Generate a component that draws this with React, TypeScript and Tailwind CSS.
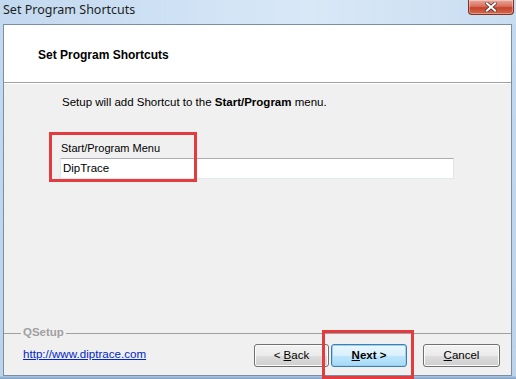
import React from "react";

const ui = { fontFamily: '"Liberation Sans", Arial, sans-serif' };

function Btn({
  children,
  primary = false,
  className = "",
}: {
  children: React.ReactNode;
  primary?: boolean;
  className?: string;
}) {
  return (
    <div
      className={`flex h-[23px] items-center justify-center rounded-[3px] border text-[11.5px] text-black ${
        primary
          ? "border-[#3c7fb1] bg-[linear-gradient(#eaf6fd,#d9f0fc_50%,#bee6fd_51%,#a7d9f5)] shadow-[inset_0_0_0_1px_#9bd1f0]"
          : "border-[#707070] bg-[linear-gradient(#f2f2f2,#ebebeb_50%,#dddddd_51%,#cfcfcf)] shadow-[inset_0_0_0_1px_#fcfcfc]"
      } ${className}`}
    >
      {children}
    </div>
  );
}

export default function App() {
  return (
    <div
      className="relative flex h-[379px] w-[516px] flex-col overflow-hidden bg-[#bcd4ec]"
      style={ui}
    >
      {/* Title bar */}
      <div className="flex h-[24px] shrink-0 items-start justify-between bg-[linear-gradient(90deg,#c3d9ef,#cfe2f5_35%,#d9e8f7_60%,#c9ddf1)]">
        <div
          className="pl-[3px] pt-[1px] text-[12.5px] leading-[17px] text-[#1e1e1e]"
          style={{ fontFamily: '"Noto Sans", "Open Sans", sans-serif' }}
        >
          Set Program Shortcuts
        </div>
        <div className="mr-[2px] flex h-[15px] w-[46px] items-center justify-center rounded-b-[4px] border border-t-0 border-[#7d3326] bg-[linear-gradient(#e9a99d,#d9705d_45%,#c5432b_55%,#d46a4e)] shadow-[inset_0_0_0_1px_rgba(255,255,255,0.35)]">
          <svg width="12" height="10" viewBox="0 0 12 10">
            <path
              d="M2 1.5 L10 8.5 M10 1.5 L2 8.5"
              stroke="#3a2020"
              strokeWidth="3.4"
              strokeLinecap="square"
            />
            <path
              d="M2 1.5 L10 8.5 M10 1.5 L2 8.5"
              stroke="#ffffff"
              strokeWidth="2.2"
              strokeLinecap="square"
            />
          </svg>
        </div>
      </div>

      {/* Client area with frame */}
      <div className="flex min-h-0 flex-1">
        <div className="w-[3px] shrink-0 bg-[linear-gradient(#c3d9ef,#bcd3ea)]" />
        <div className="flex min-w-0 flex-1 flex-col border border-[#7b8ea4] bg-[#f0f0f0]">
          {/* Header */}
          <div className="flex h-[58px] shrink-0 items-center border-b border-[#a0a0a0] bg-white pl-[34px] shadow-[0_1px_0_#ffffff]">
            <span className="pt-[2px] text-[12px] font-bold text-black">
              Set Program Shortcuts
            </span>
          </div>

          {/* Body */}
          <div className="flex flex-1 flex-col">
            <div className="ml-[58px] mt-[12px] text-[11.5px] leading-[14px] text-black">
              Setup will add Shortcut to the <b>Start/Program</b> menu.
            </div>

            <div className="ml-[57px] mt-[32px] text-[11px] leading-[14px] text-black">
              Start/Program Menu
            </div>
            <div className="ml-[56px] mt-[3px] flex h-[21px] w-[394px] items-center border border-t-[#abadb3] border-x-[#e2e3ea] border-b-[#e3e9ef] bg-white pl-[2px] text-[11.5px] text-black">
              DipTrace
            </div>

            <div className="flex-1" />

            {/* Group line */}
            <div className="flex h-[14px] items-center">
              <div className="h-px w-[17px] bg-[#a0a0a0]" />
              <span className="px-[2px] text-[11.5px] font-bold text-[#a0a0a0]">
                QSetup
              </span>
              <div className="h-px flex-1 bg-[#a0a0a0]" />
            </div>

            {/* Footer */}
            <div className="mb-[8px] mt-[4px] flex items-start">
              <span className="ml-[19px] mt-[3px] text-[11.6px] leading-[14px] text-[#0026c8] underline">
                http://www.diptrace.com
              </span>
              <div className="flex-1" />
              <Btn className="w-[75px]">
                &lt; <span className="ml-[3px] underline">B</span>ack
              </Btn>
              <Btn primary className="ml-[2px] w-[76px] font-bold">
                <span className="underline">N</span>ext &gt;
              </Btn>
              <Btn className="ml-[16px] mr-[11px] w-[77px]">
                <span className="underline">C</span>ancel
              </Btn>
            </div>
          </div>
        </div>
        <div className="w-[4px] shrink-0 bg-[linear-gradient(#c3d9ef,#bcd3ea)]" />
      </div>
      <div className="h-[3px] shrink-0 bg-[linear-gradient(#aec8e4,#7d9ec4)]" />

      {/* Red annotation boxes */}
      <div className="pointer-events-none absolute left-[49px] top-[132px] h-[50px] w-[148px] border-[3px] border-[#e43b3f]" />
      <div className="pointer-events-none absolute left-[322px] top-[330px] h-[49px] w-[92px] border-[3px] border-[#e43b3f]" />
    </div>
  );
}
